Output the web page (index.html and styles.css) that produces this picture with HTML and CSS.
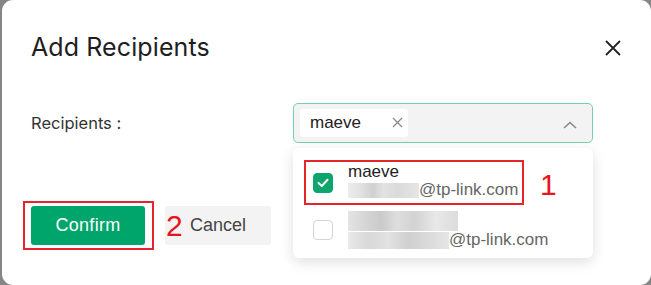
FILE: index.html
```html
<!DOCTYPE html>
<html>
<head>
<meta charset="utf-8">
<link rel="stylesheet" href="styles.css">
</head>
<body>
<div class="dialog">
  <div class="header">
    <h1 class="title">Add Recipients</h1>
    <svg class="close" width="18" height="18" viewBox="0 0 18 18"><path d="M2 2L16 16M16 2L2 16" stroke="#222" stroke-width="1.8" fill="none"/></svg>
  </div>
  <div class="row">
    <label class="label">Recipients :</label>
    <div class="select">
      <span class="tag">maeve<svg class="tag-x" width="11" height="11" viewBox="0 0 11 11"><path d="M1 1L10 10M10 1L1 10" stroke="#8a8a8a" stroke-width="1.3" fill="none"/></svg></span>
      <svg class="chev" width="14" height="8" viewBox="0 0 14 8"><path d="M1 7L7 1.5L13 7" stroke="#888" stroke-width="1.6" fill="none"/></svg>
    </div>
  </div>
  <div class="footer">
    <div class="mark-box">
      <button class="btn confirm">Confirm</button>
    </div>
    <div class="cancel-wrap">
      <button class="btn cancel">Cancel</button>
      <span class="num num2">2</span>
    </div>
  </div>
  <div class="dropdown">
    <div class="item selected">
      <span class="check on"><svg width="12" height="10" viewBox="0 0 12 10"><path d="M1.5 5L4.8 8L10.5 1.8" stroke="#fff" stroke-width="2" fill="none" stroke-linecap="round" stroke-linejoin="round"/></svg></span>
      <div class="info">
        <div class="name">maeve</div>
        <div class="mail"><span class="blur b1"></span>@tp-link.com</div>
      </div>
      <span class="num num1">1</span>
    </div>
    <div class="item plain">
      <span class="check"></span>
      <div class="info">
        <div class="blur b2"></div>
        <div class="mail"><span class="blur b3"></span>@tp-link.com</div>
      </div>
    </div>
  </div>
</div>
</body>
</html>
```
FILE: styles.css
```css
html, body { margin: 0; padding: 0; }
body {
  background: #868686;
  width: 651px;
  height: 285px;
  overflow: hidden;
  font-family: "Liberation Sans", Arial, sans-serif;
}
.dialog {
  position: relative;
  margin-left: 2px;
  width: 649px;
  height: 285px;
  background: #fff;
  border-radius: 11px;
  box-sizing: border-box;
  padding: 0 31px 0 29px;
}
.header {
  display: flex;
  justify-content: space-between;
  align-items: center;
  padding-top: 31px;
  height: 32px;
}
.title {
  margin: 0;
  font-family: Inter, sans-serif;
  font-weight: 400;
  font-size: 25px;
  line-height: 32px;
  color: #1e1e1e;
  letter-spacing: 0.1px;
}
.close { margin-right: -2px; margin-top: 2px; }
.row {
  display: flex;
  align-items: center;
  margin-top: 40px;
}
.label {
  width: 262px;
  font-family: Inter, sans-serif;
  font-size: 16.5px;
  color: #333;
  margin-top: -1px;
}
.select {
  width: 300px;
  height: 40px;
  box-sizing: border-box;
  border: 1.5px solid #72d3a7;
  border-radius: 5px;
  background: #f3f3f3;
  display: flex;
  align-items: center;
  justify-content: space-between;
  padding: 0 15px 0 6px;
}
.tag {
  display: flex;
  align-items: center;
  justify-content: space-between;
  width: 108px;
  height: 28px;
  box-sizing: border-box;
  background: #fff;
  border-radius: 3px;
  padding: 0 5px 0 10px;
  font-size: 17px;
  color: #222;
}
.tag-x { margin-top: -2px; }
.chev { margin-top: 4px; }
.footer {
  display: flex;
  align-items: center;
  margin-top: 58px;
  margin-left: -8px;
  gap: 11px;
}
.mark-box {
  border: 2px solid #e6252b;
  padding: 3px 7px 3px 6px;
}
.btn {
  border: none;
  border-radius: 3px;
  height: 39px;
  font-family: "Liberation Sans", Arial, sans-serif;
  font-size: 18px;
  padding: 0;
}
.confirm {
  width: 114px;
  background: #00a56c;
  color: #fff;
  letter-spacing: 0.3px;
}
.cancel-wrap { position: relative; }
.cancel {
  width: 106px;
  background: #f3f3f3;
  color: #444;
  text-align: center;
}
.num {
  position: absolute;
  font-family: "Liberation Sans", Arial, sans-serif;
  color: #e8141e;
  font-size: 30px;
  line-height: 30px;
}
.num2 { left: 1px; top: 5px; }
.dropdown {
  position: absolute;
  left: 291px;
  top: 148px;
  width: 300px;
  height: 110px;
  background: #fff;
  border-radius: 6px;
  box-shadow: 0 4px 14px rgba(0,0,0,0.13);
  box-sizing: border-box;
  padding: 12px 0 0 11px;
}
.item {
  display: flex;
  align-items: center;
  position: relative;
  height: 45px;
  box-sizing: border-box;
  padding-left: 9px;
  gap: 15px;
  white-space: nowrap;
}
.item.selected {
  width: 220px;
  border: 2px solid #e6252b;
  padding-left: 7px;
}
.item.plain { margin-top: 2px; }
.check {
  width: 20px;
  height: 20px;
  box-sizing: border-box;
  border: 1px solid #d4d4d4;
  border-radius: 4px;
  display: flex;
  align-items: center;
  justify-content: center;
  flex-shrink: 0;
}
.check.on { background: #0ea56c; border-color: #0ea56c; }
.info { display: flex; flex-direction: column; }
.name {
  font-size: 17px;
  line-height: 18px;
  color: #222;
  margin-top: -3px;
}
.mail {
  display: flex;
  align-items: center;
  font-size: 17px;
  line-height: 18px;
  color: #666;
}
.blur {
  display: inline-block;
  background: linear-gradient(90deg, #ececec 0%, #e0e0e0 20%, #d0d0d0 35%, #e2e2e2 50%, #dadada 70%, #e6e6e6 100%);
}
.b1 { width: 71px; height: 15px; }
.b2 { width: 110px; height: 20px; margin-top: 1px;
  background: linear-gradient(90deg, #e4e4e4 0%, #d6d6d6 15%, #cacaca 30%, #dedede 45%, #d2d2d2 60%, #e8e8e8 80%, #dcdcdc 100%); }
.b3 { width: 101px; height: 17px;
  background: linear-gradient(90deg, #e9e9e9 0%, #d8d8d8 20%, #e2e2e2 40%, #cfcfcf 60%, #dadada 80%, #e6e6e6 100%); }
.num1 { left: 234px; top: 8px; }
```
